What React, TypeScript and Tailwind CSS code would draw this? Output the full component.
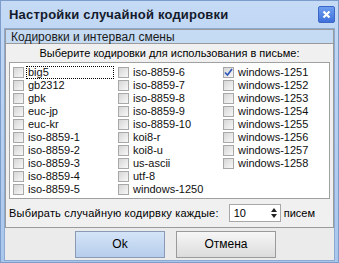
import React from 'react';

const col1 = ['big5', 'gb2312', 'gbk', 'euc-jp', 'euc-kr', 'iso-8859-1', 'iso-8859-2', 'iso-8859-3', 'iso-8859-4', 'iso-8859-5'];
const col2 = ['iso-8859-6', 'iso-8859-7', 'iso-8859-8', 'iso-8859-9', 'iso-8859-10', 'koi8-r', 'koi8-u', 'us-ascii', 'utf-8', 'windows-1250'];
const col3 = ['windows-1251', 'windows-1252', 'windows-1253', 'windows-1254', 'windows-1255', 'windows-1256', 'windows-1257', 'windows-1258'];

function Check({ label, checked, focused }: { label: string; checked?: boolean; focused?: boolean }) {
  return (
    <div className="flex items-center h-[13px]">
      <div className="w-[11px] h-[11px] ml-[2px] border border-[#a8a8a8] bg-gradient-to-br from-[#d6d6d6] to-[#f8f8f8] flex items-center justify-center">
        {checked && (
          <svg width="9" height="9" viewBox="0 0 9 9">
            <path d="M1 4.5 L3.5 7 L8 1" fill="none" stroke="#2c55b8" strokeWidth="1.6" />
          </svg>
        )}
      </div>
      <div className={`ml-[2px] pl-[2px] h-[13px] flex items-center leading-none ${focused ? 'outline outline-1 outline-dotted outline-black -outline-offset-1 w-[88px]' : ''}`}>
        {label}
      </div>
    </div>
  );
}

export default function App() {
  return (
    <div
      className="w-[339px] h-[263px] flex flex-col bg-gradient-to-b from-[#c4daf5] to-[#a9c6ec] border border-[#7c9dcc] text-[11px] text-black"
      style={{ fontFamily: '"Liberation Sans", Arial, sans-serif' }}
    >
      {/* Title bar */}
      <div className="h-[27px] flex items-center justify-between pl-[8px] pr-[3px]">
        <span className="text-[13px] font-bold text-[#141a2c] tracking-[0.2px]">Настройки случайной кодировки</span>
        <div className="w-[17px] h-[17px] rounded-[2px] border border-[#3c68c8] bg-gradient-to-b from-[#6f9ef0] to-[#3f70db] flex items-center justify-center">
          <svg width="9" height="9" viewBox="0 0 9 9">
            <path d="M1.5 1.5 L7.5 7.5 M7.5 1.5 L1.5 7.5" stroke="white" strokeWidth="2.2" />
          </svg>
        </div>
      </div>

      {/* Body */}
      <div className="flex-1 mx-[3px] mb-[1px] border border-[#8ea9cf] flex flex-col bg-[#ececec]">
        {/* Group box */}
        <div className="border border-[#9a9a9a] bg-[#f0f0f0] flex flex-col">
          <div className="h-[14px] bg-[#c5daf3] border-b border-[#9a9a9a] pl-[5px] flex items-center text-[12px] text-[#1a1a1a]">
            Кодировки и интервал смены
          </div>
          <div className="h-[18px] flex items-center justify-center text-[11px]">
            Выберите кодировки для использования в письме:
          </div>
          <div className="mx-[3px] h-[137px] bg-white border border-[#a0a0a0] flex pt-[3px] pl-[1px] text-[11px] text-[#101010]">
            <div className="w-[105px] flex flex-col">
              {col1.map((c, i) => (
                <Check key={c} label={c} focused={i === 0} />
              ))}
            </div>
            <div className="w-[105px] flex flex-col">
              {col2.map((c) => (
                <Check key={c} label={c} />
              ))}
            </div>
            <div className="w-[105px] flex flex-col">
              {col3.map((c, i) => (
                <Check key={c} label={c} checked={i === 0} />
              ))}
            </div>
          </div>
          <div className="h-[28px] flex items-center pl-[3px] text-[11px]">
            <span className="tracking-[0.2px]">Выбирать случайную кодирвку каждые:</span>
            <div className="ml-[10px] w-[52px] h-[18px] bg-white border border-[#a8a8a8] flex items-center justify-between pl-[4px] pr-[2px]">
              <span>10</span>
              <svg width="8" height="12" viewBox="0 0 8 12">
                <path d="M4 1 L7 5 L1 5 Z" fill="#222" />
                <path d="M4 11 L7 7 L1 7 Z" fill="#222" />
              </svg>
            </div>
            <span className="ml-[3px]">писем</span>
          </div>
        </div>

        {/* Buttons */}
        <div className="flex-1 flex items-center justify-center gap-[11px] pl-[12px] bg-[#ebebeb] bg-[radial-gradient(#dadada_0.6px,transparent_0.6px)] bg-[length:4px_4px]">
          <button className="w-[90px] h-[27px] border border-[#8a9ab5] bg-gradient-to-b from-[#d4e4f8] to-[#b6cdeb] text-[12px]">
            Ok
          </button>
          <button className="w-[100px] h-[27px] border border-[#9a9a9a] bg-gradient-to-b from-[#f6f6f6] to-[#dcdcdc] text-[12px]">
            Отмена
          </button>
        </div>
      </div>
    </div>
  );
}
